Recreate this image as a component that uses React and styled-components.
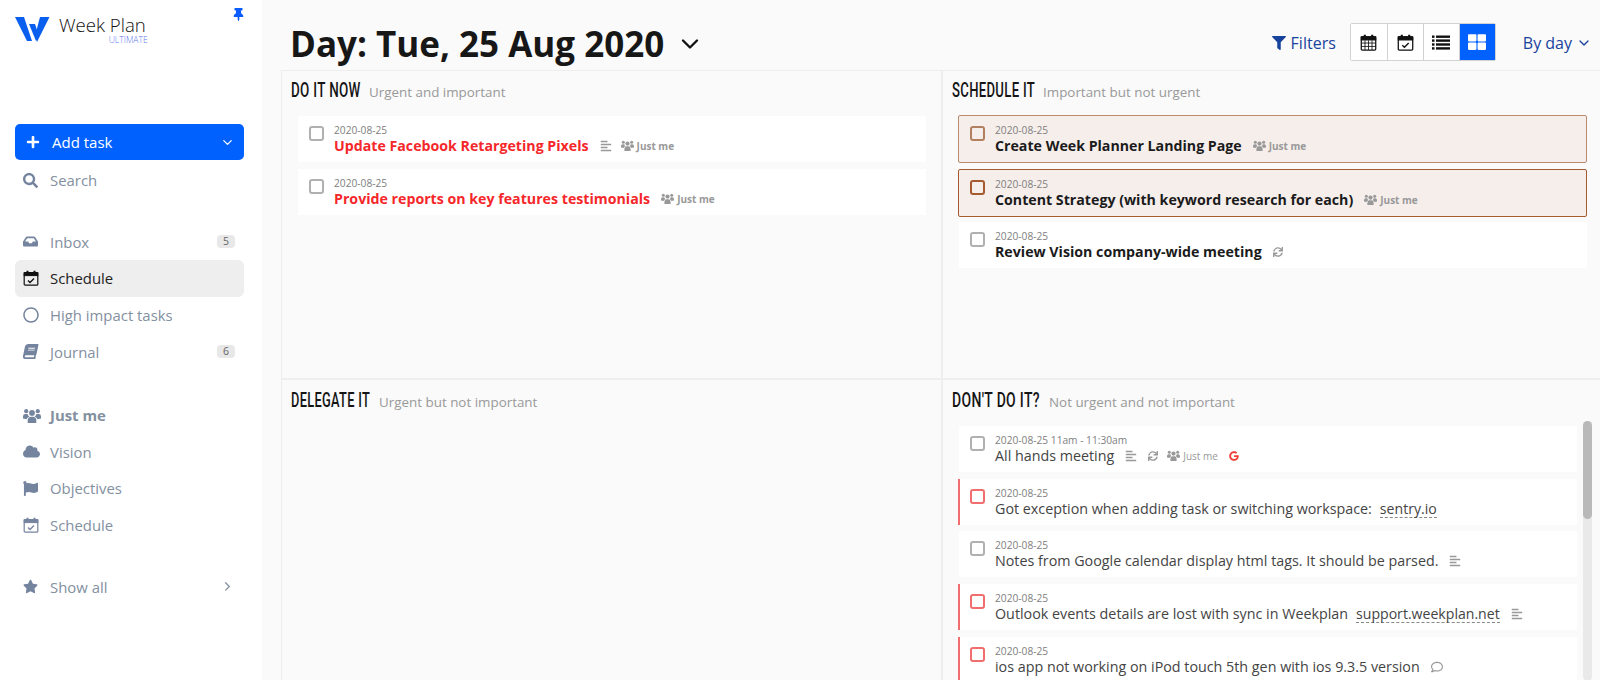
import React from "react";
import styled, { createGlobalStyle } from "styled-components";
import { FaInbox, FaBook, FaCloud, FaFlag, FaStar, FaSearch, FaPlus, FaThumbtack, FaAlignLeft, FaSync, FaFilter, FaThLarge, FaGoogle, FaRegComment, FaRegCircle } from "react-icons/fa";
import { FiChevronDown, FiChevronRight } from "react-icons/fi";

const Global = createGlobalStyle`
  html, body { margin: 0; padding: 0; height: 680px; overflow: hidden; background: #fff; }
  body { font-family: "Open Sans", "Noto Sans", sans-serif; }
  * { box-sizing: border-box; }
`;
const Page = styled.div`display: flex; width: 1600px; height: 680px; overflow: hidden;`;
const Sidebar = styled.aside`width: 262px; flex: none; background: #fff; padding: 0 18px 0 15px; display: flex; flex-direction: column;`;
const Brand = styled.div`height: 124px; display: flex; align-items: flex-start; padding-top: 16px; position: relative;`;
const BrandText = styled.div`margin: -2px 0 0 9px; display: flex; flex-direction: column; align-items: flex-end; color: #111; font-size: 18.6px; font-weight: 300; line-height: 22px;`;
const BrandTier = styled.span`font-size: 8.6px; line-height: 8px; color: #6478f0; margin-right: -2px;`;
const Pin = styled.span`position: absolute; right: -1px; top: 7px; color: #0a5cff; font-size: 13px;`;
const AddTask = styled.button`height: 36px; width: 229px; background: #0061ff; color: #fff; border: 0; border-radius: 5px; display: flex; align-items: center; padding: 0 9px 0 11px; font: 15px "Open Sans", sans-serif; svg:first-child { font-size: 14px; } span { margin-left: 12px; flex: 1; text-align: left; }`;
const NavGroup = styled.nav`display: flex; flex-direction: column; margin-top: ${p => p.$top}px;`;
const NavRow = styled.div`height: 36.6px; display: flex; align-items: center; padding: 0 9px 0 8px; border-radius: 6px; font-size: 14.9px; color: ${p => p.$active ? "#222" : "#83909f"}; background: ${p => p.$active ? "#eeeeee" : "transparent"}; font-weight: ${p => p.$bold ? 700 : 400};`;
const NavIcon = styled.span`width: 27px; flex: none; display: flex; align-items: center; font-size: ${p => p.$size || 15}px; color: ${p => p.$active ? "#111" : "#75849e"};`;
const Slanted = styled(FaBook)`transform: skewX(-12deg);`;
const NavLabel = styled.span`flex: 1;`;
const Badge = styled.span`background: #e8e8e8; color: #666; font-size: 10.5px; line-height: 13px; padding: 0 6px; border-radius: 4px;`;
const Main = styled.main`flex: 1; min-width: 0; background: #fafafa; display: flex; flex-direction: column;`;
const Header = styled.header`height: 70px; flex: none; display: flex; align-items: center; padding: 15px 8px 0 28px;`;
const Title = styled.h1`margin: 2px 0 0; font-size: 35px; font-weight: 700; color: #171717; white-space: nowrap; line-height: 44px;`;
const TitleChevron = styled.span`margin: 2px 0 0 12px; font-size: 28px; display: flex; color: #111;`;
const Spacer = styled.div`flex: 1;`;
const Filter = styled.span`display: flex; align-items: center; gap: 5px; color: #18439d; font-size: 16px; margin-right: 14px; svg { font-size: 14px; }`;
const Views = styled.div`display: flex; border: 1px solid #d2d2d2; border-radius: 2px; height: 38px; margin-top: -1px;`;
const View = styled.span`width: 36px; display: flex; align-items: center; justify-content: center; font-size: 18px; color: ${p => p.$on ? "#fff" : "#111"}; background: ${p => p.$on ? "#0061ff" : "#fff"}; border-left: ${p => p.$first ? 0 : "1px solid #d2d2d2"};`;
const ByDay = styled.span`margin-left: 27px; display: flex; align-items: center; gap: 4px; color: #18439d; font-size: 16px;`;
const Grid = styled.div`flex: 1; min-height: 0; display: grid; grid-template-columns: 661px 1fr; grid-template-rows: 309px 1fr; border-top: 1px solid #eeeeee; margin-left: 19px; border-left: 1px solid #eee;`;
const Quad = styled.section`min-width: 0; min-height: 0; position: relative; display: flex; flex-direction: column; border-right: ${p => p.$right ? "2px solid #eee" : 0}; border-bottom: ${p => p.$bottom ? "2px solid #eee" : 0}; padding: ${p => p.$pt}px 0 0 ${p => p.$pl}px;`;
const QuadHead = styled.div`display: flex; align-items: center; height: ${p => p.$h}px; flex: none; padding-bottom: ${p => p.$h - 24}px;`;
const QuadTitle = styled.h2`margin: 0 9px 0 0; width: ${p => p.$w}px; font: 500 21px/24px "Roboto", sans-serif; letter-spacing: 0.5px; color: #151515; text-transform: uppercase; white-space: nowrap;`;
const QuadTitleInk = styled.span`display: inline-block; transform: scaleX(${p => p.$sx}); transform-origin: left center;`;
const QuadSub = styled.span`font-size: 13.4px; color: #999; white-space: nowrap; margin-top: 4px;`;
const Cards = styled.div`display: flex; flex-direction: column; margin-left: ${p => p.$ml}px; margin-right: ${p => p.$mr}px;`;
const Card = styled.article`height: ${p => p.$hl ? 48 : 46}px; margin-bottom: ${p => p.$hl ? 5.5 : 6.7}px; margin-left: ${p => p.$hl || p.$alert ? -1 : 0}px; flex: none; display: flex; align-items: flex-start; background: ${p => p.$hl ? "#f6eeeb" : "#fff"}; border: ${p => p.$hl ? `1px solid ${p.$hl}` : 0}; border-left: ${p => p.$hl ? `1px solid ${p.$hl}` : p.$alert ? "2px solid #f26d6d" : "0"}; border-radius: ${p => p.$hl ? "2px" : 0}; padding: 8px 0 0 ${p => p.$hl ? "11px" : p.$alert ? "10px" : "11px"};`;
const Check = styled.span`width: 15px; height: 15px; flex: none; margin-top: 2px; border: 2px solid ${p => p.$c || "#b0b0b0"}; border-radius: 3px; background: transparent;`;
const CardBody = styled.div`margin-left: 10px; min-width: 0;`;
const CardDate = styled.div`font-size: 10.2px; line-height: 12px; color: #808080;`;
const CardLine = styled.div`display: flex; align-items: center; line-height: 20px; height: 20px; white-space: nowrap;`;
const CardTitle = styled.span`font-size: ${p => p.$bold ? 14.2 : 14.3}px; font-weight: ${p => p.$bold ? 700 : 400}; color: ${p => p.$red ? "#f5272a" : p.$bold ? "#1b1b1b" : "#444"};`;
const Link = styled.span`margin-left: 8px; font-size: 14.1px; color: #444; border-bottom: 1px dashed #888; line-height: 17px;`;
const Meta = styled.span`margin-left: ${p => p.$ml ?? 11}px; display: inline-flex; align-items: center; gap: 3px; font-size: 10px; color: ${p => p.$c || "#999"}; font-weight: ${p => p.$bold ? 700 : 400}; svg { font-size: ${p => p.$icon || 13}px; }`;
const Scroll = styled.div`position: absolute; right: 8px; top: 41px; width: 9px; height: 260px; border-radius: 5px; background: #e9e9e9;`;
const Thumb = styled.div`height: 98px; border-radius: 5px; background: #b9b9b9;`;

const Logo = () => (
  <svg width="35" height="26" viewBox="0 0 35 26" fill="#0a5fee"><path d="M0 1H9L17 25H12Z" /><path d="M14 8H20L24 20L21 25Z" /><path d="M25 1H34.5L22 26L20 20Z" /></svg>
);
const Users = () => (
  <svg width="1em" height="0.85em" viewBox="0 0 18 15" fill="currentColor">
    <circle cx="9" cy="4.8" r="2.9" /><circle cx="3.2" cy="3" r="2.1" /><circle cx="14.8" cy="3" r="2.1" />
    <path d="M4.7 15v-2.8a3.6 3.6 0 0 1 3-3.6h2.6a3.6 3.6 0 0 1 3 3.6V15z" />
    <path d="M0 10.4V8a2.3 2.3 0 0 1 2.3-2.2h2.2c.3 1.2 1 2.1 1.9 2.7-1.4.4-2.4 1.4-2.8 2.6z" />
    <path d="M18 10.4V8a2.3 2.3 0 0 0-2.3-2.2h-2.2c-.3 1.2-1 2.1-1.9 2.7 1.4.4 2.4 1.4 2.8 2.6z" />
  </svg>
);
const Calendar = ({ check, grid, size = 16 }) => (
  <svg width={size} height={size} viewBox="0 0 16 16" fill="none" stroke="currentColor">
    <rect x="1.2" y="2.6" width="13.6" height="12.6" rx="1" strokeWidth="1.2" />
    <rect x="1.2" y="2.6" width="13.6" height="3" fill="currentColor" strokeWidth="1" />
    <path d="M4.5 .8v3M11.5 .8v3" strokeWidth="2" />
    {check && <path d="M5 10.5l2 2 4-4" strokeWidth="1.3" />}
    {grid && <path d="M1.5 8.5h13M1.5 11.7h13M4.7 6v9M8 6v9M11.3 6v9" strokeWidth=".8" />}
  </svg>
);
const ListGlyph = () => (
  <svg width="18" height="15" viewBox="0 0 18 15" fill="#111">
    <rect x="0" y="0.5" width="2.5" height="2.4" /><rect x="4" y="0.5" width="14" height="2.4" />
    <rect x="0" y="4.4" width="2.5" height="2.4" /><rect x="4" y="4.4" width="14" height="2.4" />
    <rect x="0" y="8.3" width="2.5" height="2.4" /><rect x="4" y="8.3" width="14" height="2.4" />
    <rect x="0" y="12.2" width="2.5" height="2.4" /><rect x="4" y="12.2" width="14" height="2.4" />
  </svg>
);
const Task = ({ title, date = "2020-08-25", red, bold, hl, alert, check, link, notes, sync, who, whoThin, google, comment }) => (
  <Card $hl={hl} $alert={alert}>
    <Check $c={check} />
    <CardBody>
      <CardDate>{date}</CardDate>
      <CardLine>
        <CardTitle $red={red} $bold={bold}>{title}</CardTitle>
        {link && <Link>{link}</Link>}
        {notes && <Meta $icon={12}><FaAlignLeft /></Meta>}
        {sync && <Meta $icon={10}><FaSync /></Meta>}
        {comment && <Meta $icon={12}><FaRegComment /></Meta>}
        {who && <Meta $ml={notes ? 9 : 11} $bold={!whoThin}><Users />Just me</Meta>}
        {google && <Meta $c="#ef3b33" $icon={10}><FaGoogle /></Meta>}
      </CardLine>
    </CardBody>
  </Card>
);
const Heading = ({ name, sub, w, sx }) => (
  <>
    <QuadTitle $w={w}><QuadTitleInk $sx={sx}>{name}</QuadTitleInk></QuadTitle>
    <QuadSub>{sub}</QuadSub>
  </>
);
export default function App() {
  return (
    <Page>
      <Global />
      <Sidebar>
        <Brand>
          <Logo />
          <BrandText>Week Plan<BrandTier>ULTIMATE</BrandTier></BrandText>
          <Pin><FaThumbtack /></Pin>
        </Brand>
        <AddTask><FaPlus /><span>Add task</span><FiChevronDown /></AddTask>
        <NavGroup $top={2}>
          <NavRow><NavIcon><FaSearch /></NavIcon><NavLabel>Search</NavLabel></NavRow>
        </NavGroup>
        <NavGroup $top={25}>
          <NavRow><NavIcon><FaInbox /></NavIcon><NavLabel>Inbox</NavLabel><Badge>5</Badge></NavRow>
          <NavRow $active><NavIcon $active><Calendar check /></NavIcon><NavLabel>Schedule</NavLabel></NavRow>
          <NavRow><NavIcon $size={16}><FaRegCircle /></NavIcon><NavLabel>High impact tasks</NavLabel></NavRow>
          <NavRow><NavIcon><Slanted /></NavIcon><NavLabel>Journal</NavLabel><Badge>6</Badge></NavRow>
        </NavGroup>
        <NavGroup $top={27}>
          <NavRow $bold><NavIcon $size={18}><Users /></NavIcon><NavLabel>Just me</NavLabel></NavRow>
          <NavRow><NavIcon $size={17}><FaCloud /></NavIcon><NavLabel>Vision</NavLabel></NavRow>
          <NavRow><NavIcon><FaFlag /></NavIcon><NavLabel>Objectives</NavLabel></NavRow>
          <NavRow><NavIcon><Calendar check /></NavIcon><NavLabel>Schedule</NavLabel></NavRow>
        </NavGroup>
        <NavGroup $top={25}>
          <NavRow><NavIcon><FaStar /></NavIcon><NavLabel>Show all</NavLabel><FiChevronRight /></NavRow>
        </NavGroup>
      </Sidebar>
      <Main>
        <Header>
          <Title>Day: Tue, 25 Aug 2020</Title>
          <TitleChevron><FiChevronDown /></TitleChevron>
          <Spacer />
          <Filter><FaFilter />Filters</Filter>
          <Views>
            <View $first><Calendar grid size={17} /></View>
            <View><Calendar check size={17} /></View>
            <View><ListGlyph /></View>
            <View $on><FaThLarge /></View>
          </Views>
          <ByDay>By day <FiChevronDown /></ByDay>
        </Header>
        <Grid>
          <Quad $right $bottom $pt={7} $pl={9}>
            <QuadHead $h={38}><Heading name="Do it now" sub="Urgent and important" w={69} sx={0.64} /></QuadHead>
            <Cards $ml={7} $mr={15}>
              <Task red bold title="Update Facebook Retargeting Pixels" notes who />
              <Task red bold title="Provide reports on key features testimonials" who />
            </Cards>
          </Quad>
          <Quad $bottom $pt={7} $pl={9}>
            <QuadHead $h={37}><Heading name="Schedule it" sub="Important but not urgent" w={82} sx={0.625} /></QuadHead>
            <Cards $ml={7} $mr={13}>
              <Task bold hl="#bd8a70" check="#b2805f" title="Create Week Planner Landing Page" who />
              <Task bold hl="#a65a30" check="#a65a30" title="Content Strategy (with keyword research for each)" who />
              <Task bold title="Review Vision company-wide meeting" sync />
            </Cards>
          </Quad>
          <Quad $right $pt={8} $pl={9}>
            <QuadHead $h={38}><Heading name="Delegate it" sub="Urgent but not important" w={79} sx={0.61} /></QuadHead>
          </Quad>
          <Quad $pt={8} $pl={9}>
            <QuadHead $h={38}><Heading name="Don't do it?" sub="Not urgent and not important" w={88} sx={0.665} /></QuadHead>
            <Cards $ml={7} $mr={23}>
              <Task date="2020-08-25 11am - 11:30am" title="All hands meeting" notes sync who whoThin google />
              <Task alert check="#f26d6d" title="Got exception when adding task or switching workspace:" link="sentry.io" />
              <Task title="Notes from Google calendar display html tags. It should be parsed." notes />
              <Task alert check="#f26d6d" title="Outlook events details are lost with sync in Weekplan" link="support.weekplan.net" notes />
              <Task alert check="#f26d6d" title="ios app not working on iPod touch 5th gen with ios 9.3.5 version" comment />
            </Cards>
            <Scroll><Thumb /></Scroll>
          </Quad>
        </Grid>
      </Main>
    </Page>
  );
}
